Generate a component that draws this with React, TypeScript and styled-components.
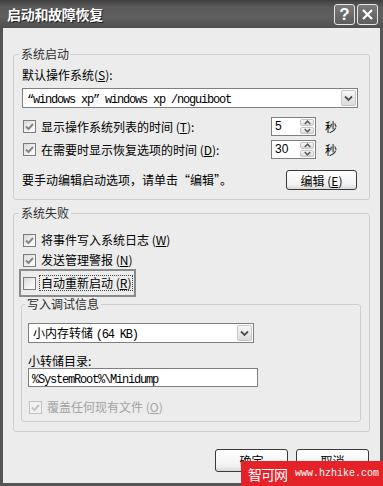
import styled, { createGlobalStyle } from "styled-components";

const GlobalStyle = createGlobalStyle`
  html, body { margin: 0; padding: 0; background: #fff; }
  body {
    font-family: "Noto Sans CJK SC", "Noto Sans", sans-serif;
    font-size: 12px;
    color: #000;
  }
  * { box-sizing: border-box; }
`;

const Check = ({ checked = true, disabled = false }: { checked?: boolean; disabled?: boolean }) => (
  <CheckBox $disabled={disabled}>
    {checked && (
      <svg width="11" height="11" viewBox="0 0 11 11">
        <polyline
          points="2,5.5 4.5,8 9,3"
          fill="none"
          stroke={disabled ? "#c4c4c4" : "#858585"}
          strokeWidth="1.9"
        />
      </svg>
    )}
  </CheckBox>
);

const Chevron = () => (
  <svg width="9" height="7" viewBox="0 0 9 7">
    <polyline points="1,1.5 4.5,5 8,1.5" fill="none" stroke="#505050" strokeWidth="1.8" />
  </svg>
);

const Arrow = ({ up }: { up?: boolean }) => (
  <svg width="7" height="5" viewBox="0 0 7 5">
    <polyline
      points={up ? "0.8,4 3.5,1.2 6.2,4" : "0.8,1 3.5,3.8 6.2,1"}
      fill="none"
      stroke="#5a5a5a"
      strokeWidth="1.5"
    />
  </svg>
);

const Select = ({ width, children }: { width: number; children: React.ReactNode }) => (
  <SelectBox $w={width}>
    <SelectValue>{children}</SelectValue>
    <DropButton>
      <Chevron />
    </DropButton>
  </SelectBox>
);

const Spin = ({ value }: { value: string }) => (
  <SpinBox>
    <SpinValue>{value}</SpinValue>
    <SpinButtons>
      <SpinHalf>
        <Arrow up />
      </SpinHalf>
      <SpinHalf>
        <Arrow />
      </SpinHalf>
    </SpinButtons>
  </SpinBox>
);

export default function App() {
  return (
    <>
      <GlobalStyle />
      <Window>
        <TitleBar>
          <Title>启动和故障恢复</Title>
          <CapButton>?</CapButton>
          <CapButton>
            <svg width="13" height="13" viewBox="0 0 13 13">
              <path d="M2 2 L11 11 M11 2 L2 11" stroke="#fff" strokeWidth="2.2" />
            </svg>
          </CapButton>
        </TitleBar>

        <Client>
          <Group $pad="7px 8px 9px 8px">
            <Legend>系统启动</Legend>
            <Text>
              默认操作系统(<u>S</u>):
            </Text>
            <Gap $h={6} />
            <Select width={336}>
              <Mono>“windows xp” windows xp /noguiboot</Mono>
            </Select>
            <Row $mt={9} $h={19}>
              <Check />
              <Label $grow>
                显示操作系统列表的时间 (<u>T</u>):
              </Label>
              <Spin value="5" />
              <Unit>秒</Unit>
            </Row>
            <Row $mt={4} $h={19}>
              <Check />
              <Label $grow>
                在需要时显示恢复选项的时间 (<u>D</u>):
              </Label>
              <Spin value="30" />
              <Unit>秒</Unit>
            </Row>
            <Row $mt={11} $h={20}>
              <Text $grow>要手动编辑启动选项，请单击“编辑”。</Text>
              <PushButton $w={71} $h={20} $mr={4}>
                编辑 (<u>E</u>)
              </PushButton>
            </Row>
          </Group>

          <Group $pad="12px 8px 9px 8px" $mt={6}>
            <Legend>系统失败</Legend>
            <Row $h={16}>
              <Check />
              <Label>
                将事件写入系统日志 (<u>W</u>)
              </Label>
            </Row>
            <Row $mt={4} $h={16}>
              <Check />
              <Label>
                发送管理警报 (<u>N</u>)
              </Label>
            </Row>
            <Marked>
              <Check checked={false} />
              <Label $focus>
                自动重新启动 (<u>R</u>)
              </Label>
            </Marked>

            <Group $pad="12px 6px 6px 6px" $ml={-1}>
              <Legend>写入调试信息</Legend>
              <Select width={226}>
                小内存转储 <Mono>(64 KB)</Mono>
              </Select>
              <Text $mt={11}>小转储目录:</Text>
              <Input>
                <Mono>%SystemRoot%\Minidump</Mono>
              </Input>
              <Row $mt={12} $h={16}>
                <Check disabled />
                <Label $disabled>
                  覆盖任何现有文件 (<u>O</u>)
                </Label>
              </Row>
            </Group>
          </Group>

          <Buttons>
            <PushButton $w={73} $h={23}>确定</PushButton>
            <PushButton $w={73} $h={23}>取消</PushButton>
          </Buttons>
        </Client>

        <Watermark>
          <WmName>智可网</WmName>
          <WmUrl>www.hzhike.com</WmUrl>
        </Watermark>
      </Window>
    </>
  );
}

const Window = styled.div`
  position: relative;
  width: 383px;
  height: 486px;
  display: flex;
  flex-direction: column;
  overflow: hidden;
`;

const TitleBar = styled.div`
  height: 28px;
  flex: none;
  display: flex;
  align-items: center;
  padding: 0 5px 0 7px;
  background: linear-gradient(#3f3f3f 0%, #5a5a5a 25%, #5f5f5f 60%, #4f4f4f 100%);
`;

const Title = styled.div`
  flex: 1;
  color: #fff;
  font-weight: bold;
  font-size: 14px;
  letter-spacing: -0.3px;
  text-shadow: 1px 1px 0 #1f1f1f;
`;

const CapButton = styled.div`
  width: 21px;
  height: 21px;
  margin-left: 2px;
  border: 1px solid #e6e6e6;
  border-radius: 3px;
  background: linear-gradient(#7a7a7a, #5c5c5c);
  color: #fff;
  font-family: "Liberation Sans", sans-serif;
  font-weight: bold;
  font-size: 17px;
  display: grid;
  place-items: center;
  line-height: 1;
`;

const Client = styled.div`
  flex: 1;
  display: flex;
  flex-direction: column;
  background: #ececec;
  border: 3px solid #555;
  border-top: 0;
  padding: 19px 10px 0 10px;
`;

const Group = styled.fieldset<{ $pad: string; $mt?: number; $ml?: number }>`
  align-self: stretch;
  margin: ${(p) => p.$mt ?? 0}px 0 0 ${(p) => p.$ml ?? 0}px;
  min-width: 0;
  padding: ${(p) => p.$pad};
  border: 1px solid #cdcdcd;
  border-radius: 3px;
  display: flex;
  flex-direction: column;
  align-items: flex-start;
`;

const Legend = styled.legend`
  padding: 0 2px;
  margin-left: -3px;
  line-height: 14px;
  color: #2e2e2e;
`;

const Text = styled.div<{ $mt?: number; $grow?: boolean }>`
  margin-top: ${(p) => p.$mt ?? 0}px;
  line-height: 14px;
  flex: ${(p) => (p.$grow ? 1 : "none")};
`;

const Gap = styled.div<{ $h: number }>`
  height: ${(p) => p.$h}px;
`;

const Row = styled.div<{ $mt?: number; $h: number }>`
  align-self: stretch;
  display: flex;
  align-items: center;
  height: ${(p) => p.$h}px;
  margin-top: ${(p) => p.$mt ?? 0}px;
`;

const CheckBox = styled.span<{ $disabled: boolean }>`
  flex: none;
  width: 13px;
  height: 13px;
  margin-left: 1px;
  border: 1px solid ${(p) => (p.$disabled ? "#c2c2c2" : "#7c7c7c")};
  background: ${(p) =>
    p.$disabled ? "#f2f2f2" : "linear-gradient(135deg, #d9d9d9, #f6f6f6 70%, #fff)"};
  display: grid;
  place-items: center;
`;

const Label = styled.span<{ $grow?: boolean; $disabled?: boolean; $focus?: boolean }>`
  margin-left: 3px;
  padding: 0 1px;
  line-height: 14px;
  flex: ${(p) => (p.$grow ? 1 : "none")};
  color: ${(p) => (p.$disabled ? "#a3a3a3" : "#000")};
  border: 1px ${(p) => (p.$focus ? "dotted #444" : "solid transparent")};
`;

const Marked = styled.div`
  display: flex;
  align-items: center;
  width: 117px;
  height: 28px;
  margin: 1px 0 0 -3px;
  padding-left: 1px;
  border: 2px solid #8a8a8a;
`;

const Unit = styled.span`
  width: 36px;
  margin-left: 9px;
  line-height: 14px;
`;

const Mono = styled.span`
  font-family: "Liberation Mono", "DejaVu Sans Mono", monospace;
  font-size: 12px;
  letter-spacing: -1.2px;
`;

const SelectBox = styled.div<{ $w: number }>`
  width: ${(p) => p.$w}px;
  height: 20px;
  flex: none;
  display: flex;
  align-items: center;
  padding: 1px;
  border: 1px solid #7f7f7f;
  background: #fff;
`;

const SelectValue = styled.div`
  flex: 1;
  padding-left: 3px;
  white-space: nowrap;
  overflow: hidden;
`;

const DropButton = styled.div`
  width: 15px;
  height: 100%;
  border: 1px solid #c6c6c6;
  border-radius: 2px;
  background: linear-gradient(#f7f7f7, #dcdcdc);
  display: grid;
  place-items: center;
`;

const SpinBox = styled.div`
  width: 45px;
  height: 19px;
  flex: none;
  display: flex;
  padding: 1px;
  border: 1px solid #7f7f7f;
  background: #fff;
`;

const SpinValue = styled.div`
  flex: 1;
  padding-left: 2px;
  font-family: "Liberation Sans", sans-serif;
  font-size: 12px;
  line-height: 15px;
`;

const SpinButtons = styled.div`
  width: 14px;
  display: flex;
  flex-direction: column;
  gap: 1px;
`;

const SpinHalf = styled.div`
  flex: 1;
  border: 1px solid #c6c6c6;
  border-radius: 2px;
  background: linear-gradient(#f7f7f7, #dadada);
  display: grid;
  place-items: center;
`;

const Input = styled.div`
  width: 230px;
  height: 19px;
  padding: 0 3px;
  border: 1px solid #7f7f7f;
  background: #fff;
  line-height: 17px;
`;

const PushButton = styled.div<{ $w: number; $h: number; $mr?: number }>`
  flex: none;
  width: ${(p) => p.$w}px;
  height: ${(p) => p.$h}px;
  margin-right: ${(p) => p.$mr ?? 0}px;
  border: 1px solid #3a3a3a;
  border-radius: 3px;
  background: linear-gradient(#ffffff, #f2f2f2 75%, #d9d9d9);
  display: flex;
  align-items: center;
  justify-content: center;
`;

const Buttons = styled.div`
  display: flex;
  justify-content: flex-end;
  gap: 8px;
  margin-top: 17px;
  padding-right: 1px;
`;

const Watermark = styled.div`
  position: absolute;
  right: 0;
  bottom: 0;
  width: 142px;
  height: 25px;
  display: flex;
  align-items: center;
  padding-left: 7px;
  background: #e52228;
  color: #fff;
`;

const WmName = styled.span`
  font-size: 14px;
  letter-spacing: -1px;
`;

const WmUrl = styled.span`
  margin-left: 8px;
  font-family: "Liberation Mono", monospace;
  font-size: 10px;
  letter-spacing: 0px;
`;
